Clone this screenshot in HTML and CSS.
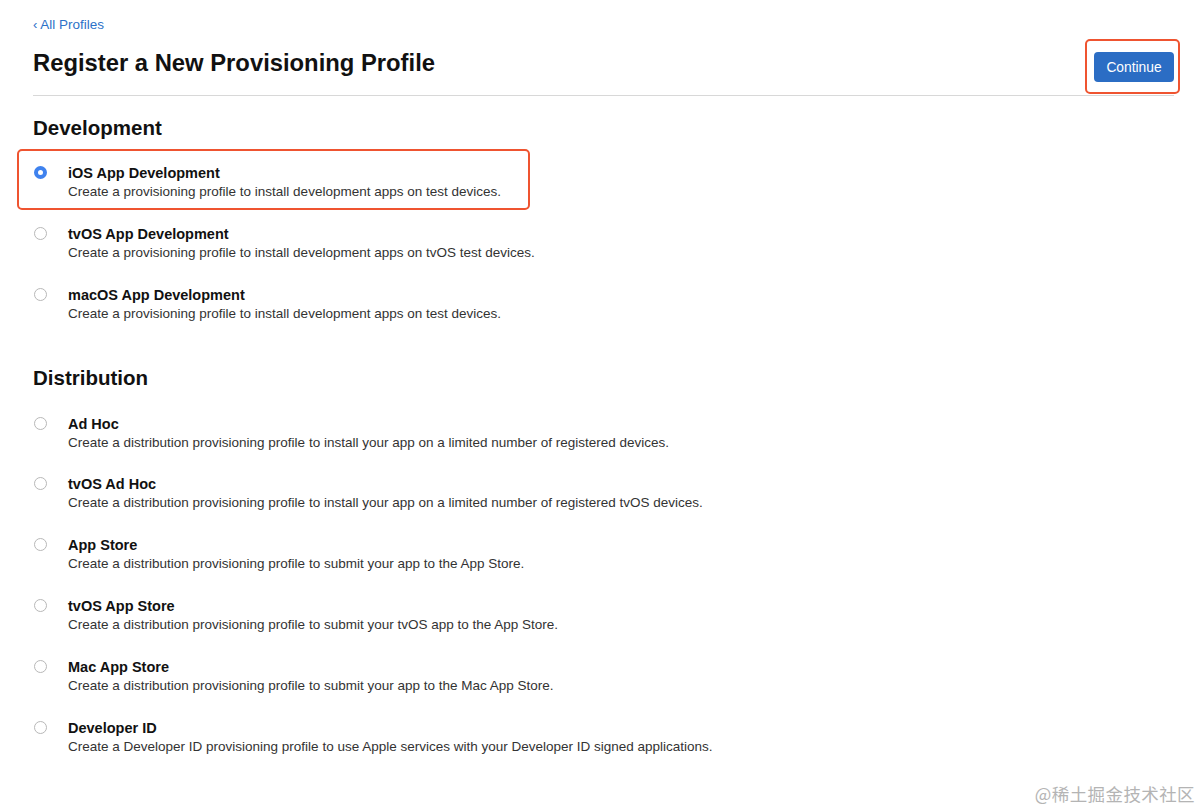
FILE: index.html
```html
<!DOCTYPE html>
<html lang="en">
<head>
<meta charset="utf-8">
<title>Register a New Provisioning Profile</title>
<link rel="stylesheet" href="styles.css">
</head>
<body>
<div class="page">
  <a class="back" href="#"><span class="chev">‹</span> All Profiles</a>
  <header class="head">
    <h1 class="title">Register a New Provisioning Profile</h1>
    <div class="btn-wrap highlight-btn">
      <button class="btn" type="button">Continue</button>
    </div>
  </header>

  <section class="group dev">
    <h2 class="group-title">Development</h2>
    <ul class="options">
      <li class="option highlight-opt">
        <span class="radio checked"></span>
        <div class="text">
          <div class="opt-title">iOS App Development</div>
          <div class="opt-desc">Create a provisioning profile to install development apps on test devices.</div>
        </div>
      </li>
      <li class="option">
        <span class="radio"></span>
        <div class="text">
          <div class="opt-title">tvOS App Development</div>
          <div class="opt-desc">Create a provisioning profile to install development apps on tvOS test devices.</div>
        </div>
      </li>
      <li class="option">
        <span class="radio"></span>
        <div class="text">
          <div class="opt-title">macOS App Development</div>
          <div class="opt-desc">Create a provisioning profile to install development apps on test devices.</div>
        </div>
      </li>
    </ul>
  </section>

  <section class="group dist">
    <h2 class="group-title">Distribution</h2>
    <ul class="options">
      <li class="option">
        <span class="radio"></span>
        <div class="text">
          <div class="opt-title">Ad Hoc</div>
          <div class="opt-desc">Create a distribution provisioning profile to install your app on a limited number of registered devices.</div>
        </div>
      </li>
      <li class="option">
        <span class="radio"></span>
        <div class="text">
          <div class="opt-title">tvOS Ad Hoc</div>
          <div class="opt-desc">Create a distribution provisioning profile to install your app on a limited number of registered tvOS devices.</div>
        </div>
      </li>
      <li class="option">
        <span class="radio"></span>
        <div class="text">
          <div class="opt-title">App Store</div>
          <div class="opt-desc">Create a distribution provisioning profile to submit your app to the App Store.</div>
        </div>
      </li>
      <li class="option">
        <span class="radio"></span>
        <div class="text">
          <div class="opt-title">tvOS App Store</div>
          <div class="opt-desc">Create a distribution provisioning profile to submit your tvOS app to the App Store.</div>
        </div>
      </li>
      <li class="option">
        <span class="radio"></span>
        <div class="text">
          <div class="opt-title">Mac App Store</div>
          <div class="opt-desc">Create a distribution provisioning profile to submit your app to the Mac App Store.</div>
        </div>
      </li>
      <li class="option">
        <span class="radio"></span>
        <div class="text">
          <div class="opt-title">Developer ID</div>
          <div class="opt-desc">Create a Developer ID provisioning profile to use Apple services with your Developer ID signed applications.</div>
        </div>
      </li>
    </ul>
  </section>
</div>
<div class="watermark">@稀土掘金技术社区</div>
</body>
</html>
```
FILE: styles.css
```css
* { box-sizing: border-box; }
html, body { margin: 0; padding: 0; background: #fff; }
body {
  width: 1201px;
  height: 812px;
  overflow: hidden;
  position: relative;
  font-family: "Liberation Sans", Arial, sans-serif;
  color: #1d1d1f;
}
.page {
  padding: 17px 27px 0 33px;
  display: flex;
  flex-direction: column;
}
.back {
  font-size: 13.5px;
  color: #2d72c8;
  text-decoration: none;
  line-height: 16px;
  align-self: flex-start;
}
.chev { font-size: 13px; }
.head {
  display: flex;
  justify-content: space-between;
  align-items: center;
  border-bottom: 1px solid #d8d8d8;
  height: 63px;
  padding-top: 6px;
}
.title {
  margin: -8px 0 0;
  font-size: 23.8px;
  font-weight: 700;
  color: #111;
}
.btn-wrap { position: relative; }
.highlight-btn::after {
  content: "";
  position: absolute;
  top: -13px; right: -6px; bottom: -12px; left: -9px;
  border: 2px solid #ef5430;
  border-radius: 5px;
}
.btn {
  display: block;
  width: 80px;
  height: 30px;
  background: #2b6dc4;
  color: #fff;
  border: 0;
  border-radius: 4px;
  font-family: inherit;
  font-size: 13.8px;
  padding: 0;
}
.group-title {
  margin: 19px 0 0;
  font-size: 20.5px;
  font-weight: 700;
  color: #111;
  line-height: 26px;
}
.dist .group-title { margin-top: 41px; }
.options {
  list-style: none;
  margin: 0;
  padding: 0;
  display: flex;
  flex-direction: column;
  gap: 22.8px;
}
.dev .options { margin-top: 23px; }
.dist .options { margin-top: 24px; }
.option {
  position: relative;
  display: flex;
  gap: 21px;
  align-items: flex-start;
}
.highlight-opt::after {
  content: "";
  position: absolute;
  top: -15px; left: -16px; bottom: -8px;
  width: 509px;
  border: 2px solid #ef5430;
  border-radius: 5px;
}
.radio {
  width: 13px;
  height: 13px;
  border-radius: 50%;
  border: 1px solid #b8b8b8;
  margin: 2px 0 0 1px;
  flex: none;
  background: #fff;
}
.radio.checked {
  border: 4px solid #3f82ee;
}
.text { display: flex; flex-direction: column; }
.opt-title {
  font-size: 14.5px;
  font-weight: 600;
  color: #111;
  line-height: 18px;
}
.opt-desc {
  font-size: 13.5px;
  color: #333;
  line-height: 20px;
}
.watermark {
  position: absolute;
  right: 6px;
  bottom: 6px;
  font-family: "Noto Sans CJK SC", sans-serif;
  font-size: 17.5px;
  color: #b4b4b4;
  letter-spacing: 0.4px;
}
```
